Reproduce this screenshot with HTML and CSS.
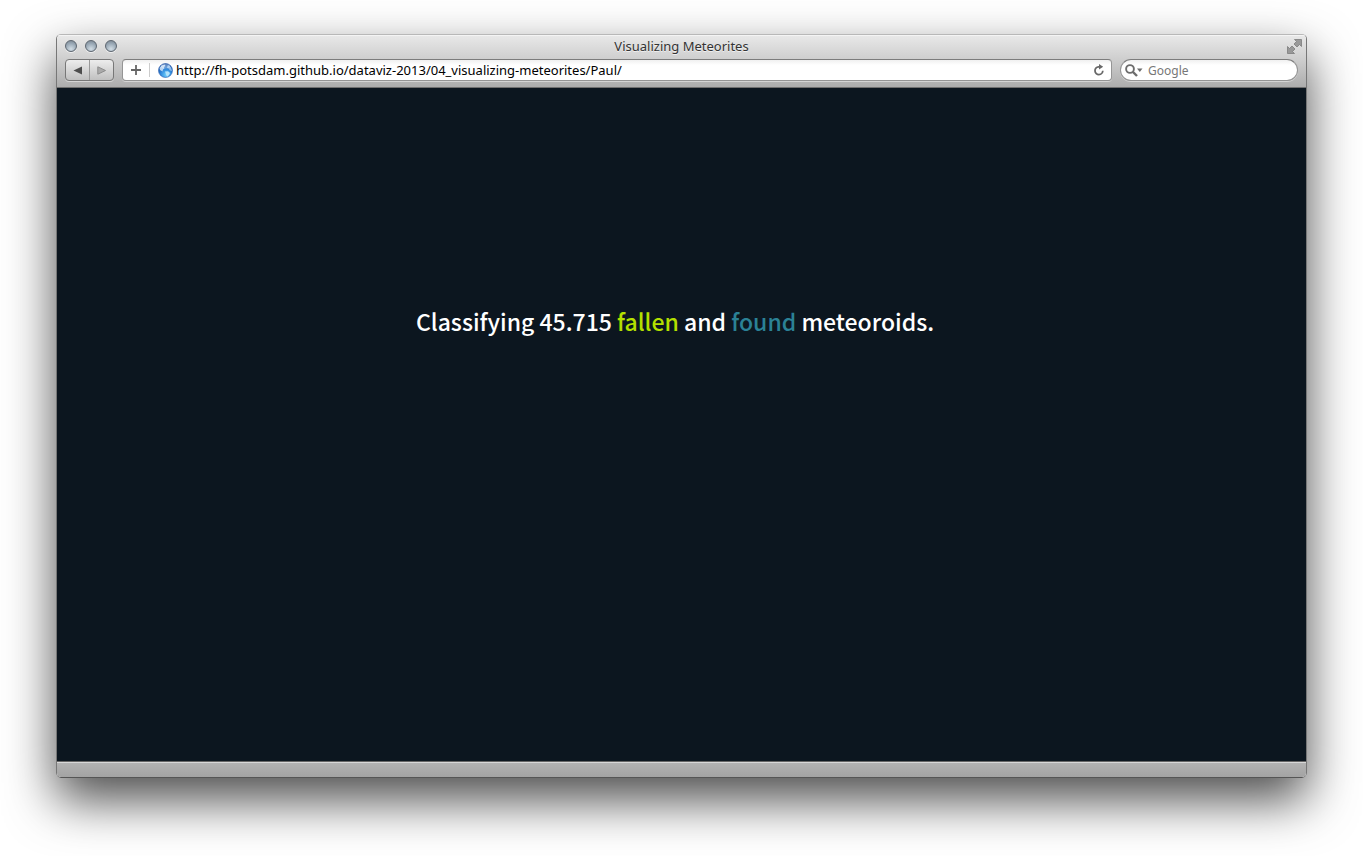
FILE: index.html
```html
<!DOCTYPE html>
<html lang="en">
<head>
<meta charset="utf-8">
<title>Visualizing Meteorites</title>
<link rel="stylesheet" href="styles.css">
</head>
<body>
<div class="window">
  <header class="chrome">
    <div class="titlebar">
      <div class="lights">
        <button class="light" aria-label="Close"></button>
        <button class="light" aria-label="Minimize"></button>
        <button class="light" aria-label="Zoom"></button>
      </div>
      <span class="title">Visualizing Meteorites</span>
      <button class="fullscreen" aria-label="Full screen">
        <svg width="15" height="15" viewBox="0 0 15 15" fill="#999" stroke="#7c7c7c" stroke-width=".8"><path d="M7.500.5h7v7l-2-2-2.500 2.500L7 5l2.500-2.500z"/><path d="M.5 7.500v7h7l-2-2L8 10 5 7 2.500 9.500z"/></svg>
      </button>
    </div>
    <div class="toolbar">
      <div class="history">
        <button class="nav" aria-label="Back"><svg width="10" height="9" viewBox="0 0 10 9"><path d="M.5 4.500 9 .5v8z" fill="#4d4d4d"/></svg></button>
        <button class="nav" aria-label="Forward"><svg width="10" height="9" viewBox="0 0 10 9"><path d="M8.500 4.500.8.800v7.400z" fill="#aaa" stroke="#8c8c8c"/></svg></button>
      </div>
      <div class="address">
        <button class="add" aria-label="Add bookmark"><svg width="10" height="10" viewBox="0 0 10 10"><path d="M5 0v10M0 5h10" stroke="#666" stroke-width="1.800"/></svg></button>
        <svg class="globe" width="15" height="15" viewBox="0 0 15 15">
          <defs><radialGradient id="sea" cx=".55" cy=".8" r=".8"><stop offset="0" stop-color="#6dcffb"/><stop offset=".5" stop-color="#2f88dc"/><stop offset="1" stop-color="#1a4799"/></radialGradient></defs>
          <circle cx="7.500" cy="7.500" r="7" fill="url(#sea)" stroke="#2c5fae" stroke-width=".6"/>
          <path d="M1.500 5 3.500 2.500l3-1 1 1.500-1.500 1 .5 1.500L5 6.500 4.500 8.500 2 7z" fill="#b9d5f2"/>
          <path d="m9.500 2.500 1.500-.3 2 2.300 1 3.500-2-.5-1.500-2L9 5z" fill="#8fbdec"/>
          <path d="m7 8.500 3-.2 2 1.700-1 2-2 1.700-1-2.200z" fill="#b4e3fb"/>
          <ellipse cx="7.500" cy="3.200" rx="4.500" ry="2.200" fill="#fff" opacity=".3"/>
        </svg>
        <input class="url" type="text" aria-label="Address" value="http://fh-potsdam.github.io/dataviz-2013/04_visualizing-meteorites/Paul/">
        <button class="reload" aria-label="Reload"><svg width="12" height="12" viewBox="0 0 12 12"><path d="M7 2.800H5.500a3.900 3.900 0 1 0 4.300 4" fill="none" stroke="#686868" stroke-width="1.800"/><path d="M6 0 10.200 2.800 6 5.600z" fill="#686868"/></svg></button>
      </div>
      <div class="search">
        <svg width="18" height="13" viewBox="0 0 18 13"><circle cx="5" cy="5" r="3.900" fill="none" stroke="#6c6c6c" stroke-width="1.900"/><path d="m8 8 4 4" stroke="#6c6c6c" stroke-width="2.400"/><path d="M12 4.500h5.500l-2.700 3.500z" fill="#6c6c6c"/></svg>
        <input class="query" type="text" aria-label="Search" placeholder="Google">
      </div>
    </div>
  </header>
  <main class="page">
    <h1 class="headline">Classifying 45.715 <span class="fallen">fallen</span> and <span class="found">found</span> meteoroids.</h1>
  </main>
  <footer class="statusbar"></footer>
</div>
</body>
</html>
```
FILE: styles.css
```css
* { box-sizing: border-box; }
body {
  margin: 0;
  min-height: 100vh;
  padding: 34px 56px 78px;
  display: flex;
  background: #fff;
  font-family: "Noto Sans", "Open Sans", sans-serif;
  overflow: hidden;
}
button, input {
  margin: 0;
  padding: 0;
  border: 0;
  background: none;
  font: inherit;
}
button { display: flex; align-items: center; justify-content: center; }
svg { display: block; flex: none; }
.window {
  flex: 1;
  min-width: 0;
  display: flex;
  flex-direction: column;
  border: 1px solid #777;
  border-top-color: #b8b8b8;
  border-bottom-color: #555;
  border-radius: 5px;
  box-shadow: 0 22px 50px rgba(0, 0, 0, .7);
  overflow: hidden;
}
.chrome {
  background: linear-gradient(#e9e9e9, #cfcfcf 45%, #adadad);
  border-bottom: 1px solid #707070;
  box-shadow: inset 0 1px #f4f4f4;
}
.titlebar {
  height: 24px;
  padding: 0 8px 2px;
  display: grid;
  grid-template-columns: 1fr auto 1fr;
  align-items: center;
}
.lights { display: flex; gap: 8px; }
.light {
  width: 12px;
  height: 12px;
  border: 1px solid #5d6670;
  border-radius: 50%;
  background: radial-gradient(circle at 50% 80%, #d2dde5, #98a7b4 60%, #77838e);
  box-shadow: 0 1px #eee;
}
.title { font-size: 13px; line-height: 20px; color: #333; text-shadow: 0 1px #f0f0f0; }
.fullscreen { justify-self: end; margin-right: -4px; }
.toolbar {
  height: 28px;
  padding: 0 8px;
  display: flex;
  align-items: flex-start;
  gap: 8px;
}
.history {
  display: flex;
  width: 49px;
  height: 22px;
  border: 1px solid #777;
  border-radius: 4px;
  background: linear-gradient(#ededed, #c0c0c0);
  box-shadow: 0 1px #d5d5d5;
}
.nav { flex: 1; }
.nav + .nav { border-left: 1px solid #999; }
.address, .search {
  display: flex;
  align-items: center;
  height: 22px;
  border: 1px solid #959595;
  border-top-color: #7c7c7c;
  background: linear-gradient(#f0f0f0, #fff 5px);
  box-shadow: 0 1px #d5d5d5;
}
.address { flex: 1; min-width: 0; border-radius: 4px; padding-right: 6px; }
.add { width: 27px; height: 14px; border-right: 1px solid #ccc; }
.globe { margin: 0 3px 0 8px; }
.url { flex: 1; min-width: 0; height: 20px; font-size: 13px; color: #000; }
.reload { width: 13px; }
.search { width: 178px; border-radius: 11px; padding: 0 8px 0 4px; gap: 5px; }
.query { flex: 1; min-width: 0; height: 20px; font-size: 12px; color: #777; }
.query::placeholder { color: #777; opacity: 1; }
.page {
  flex: 1;
  padding: 213px 24px 24px;
  background: #0c161f;
}
.headline {
  margin: 0 13px 0 0;
  font-family: "Noto Sans CJK SC", sans-serif;
  font-size: 23px;
  font-weight: 500;
  line-height: 40px;
  text-align: center;
  color: #fff;
}
.fallen { color: #b4e000; }
.found { color: #2b8296; }
.statusbar {
  height: 16px;
  border-top: 1px solid #666;
  background: linear-gradient(#b3b3b3, #a3a3a3);
  box-shadow: inset 0 1px #d8d8d8;
}
```
